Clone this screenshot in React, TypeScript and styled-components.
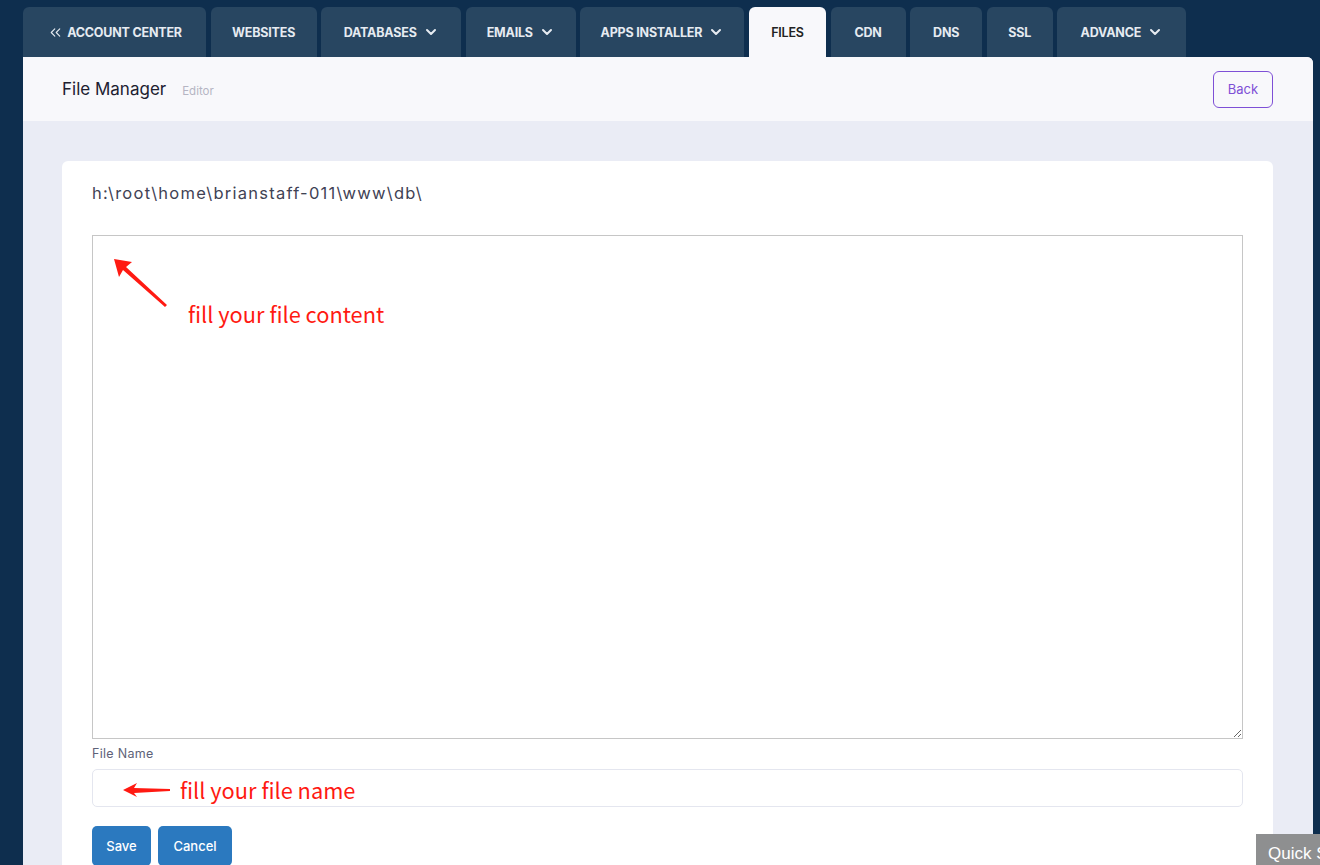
import styled, { createGlobalStyle } from "styled-components";
import { ChevronDown, ChevronsLeft } from "lucide-react";

const GlobalStyle = createGlobalStyle`
  html, body {
    margin: 0;
    padding: 0;
    background-color: #0e2e4e;
    overflow: hidden;
    font-family: Inter, "Noto Sans", sans-serif;
  }
  * {
    box-sizing: border-box;
  }
`;

const Page = styled.div`
  height: 865px;
  padding: 7px 7px 0 23px;
  display: flex;
  flex-direction: column;
`;

const TabBar = styled.nav`
  display: flex;
  flex-shrink: 0;
  gap: 4.6px;
  height: 50px;
`;

const Tab = styled.div<{ $width: number; $active?: boolean }>`
  width: ${(p) => p.$width}px;
  height: 50px;
  display: flex;
  align-items: center;
  justify-content: center;
  gap: 6px;
  border-radius: 6px 6px 0 0;
  background-color: ${(p) => (p.$active ? "#f8f8fb" : "#284661")};
  color: ${(p) => (p.$active ? "#222" : "#e6ebf1")};
  font-size: 12.5px;
  font-weight: ${(p) => (p.$active ? 600 : 700)};
  letter-spacing: -0.2px;
  text-transform: uppercase;
  white-space: nowrap;
`;

const Main = styled.main`
  flex: 1;
  min-height: 0;
  width: 1290px;
  background-color: #eaecf5;
  border-top-right-radius: 6px;
  display: flex;
  flex-direction: column;
  overflow: hidden;
`;

const Header = styled.header`
  flex-shrink: 0;
  height: 64px;
  background-color: #f8f8fb;
  display: flex;
  align-items: center;
  justify-content: space-between;
  padding: 0 40px 0 39px;
`;

const TitleGroup = styled.div`
  display: flex;
  align-items: baseline;
  gap: 16px;
`;

const Title = styled.h1`
  margin: 0;
  font-size: 17px;
  font-weight: 400;
  color: #202030;
`;

const Subtitle = styled.span`
  font-size: 11.5px;
  color: #b5b5c3;
`;

const OutlineButton = styled.button`
  width: 60px;
  height: 37px;
  border: 1px solid #7e4fd6;
  border-radius: 6px;
  background: transparent;
  color: #7e4fd6;
  font-family: inherit;
  font-size: 13px;
`;

const Body = styled.div`
  flex-shrink: 0;
  padding: 40px 40px 0 39px;
`;

const Card = styled.section`
  background-color: #ffffff;
  border-radius: 6px;
  padding: 21px 30px 30px 30px;
  min-height: 720px;
`;

const PathText = styled.div`
  font-size: 16.5px;
  line-height: 22px;
  letter-spacing: 1.25px;
  color: #3f4254;
  margin-bottom: 31px;
`;

const EditorWrap = styled.div`
  position: relative;
`;

const Editor = styled.textarea`
  display: block;
  width: 100%;
  height: 504px;
  border: 1px solid #c6c6c6;
  border-radius: 0;
  resize: vertical;
  outline: none;
  font-family: inherit;
`;

const FieldLabel = styled.label`
  display: block;
  margin-top: 7px;
  font-size: 12.5px;
  letter-spacing: 0.3px;
  color: #5e6278;
`;

const FieldWrap = styled.div`
  position: relative;
  margin-top: 8px;
`;

const TextInput = styled.input`
  display: block;
  width: 100%;
  height: 38px;
  border: 1px solid #e4e6ef;
  border-radius: 5px;
  outline: none;
`;

const Actions = styled.div`
  display: flex;
  gap: 7px;
  margin-top: 19px;
`;

const SolidButton = styled.button<{ $width: number }>`
  width: ${(p) => p.$width}px;
  height: 40px;
  border: none;
  border-radius: 5px;
  background-color: #2b79bf;
  color: #ffffff;
  font-family: inherit;
  font-size: 13px;
  font-weight: 500;
`;

const Note = styled.div<{ $left: number; $top: number }>`
  position: absolute;
  left: ${(p) => p.$left}px;
  top: ${(p) => p.$top}px;
  display: flex;
  align-items: center;
  pointer-events: none;
`;

const NoteText = styled.span`
  font-family: "Noto Sans CJK SC", "Noto Sans", sans-serif;
  font-size: 21.8px;
  color: #ff1a12;
  white-space: nowrap;
`;

const QuickTab = styled.div`
  position: fixed;
  left: 1256px;
  top: 834px;
  width: 80px;
  height: 40px;
  padding: 10px 0 0 12px;
  background-color: #8e8f90;
  color: #ffffff;
  font-family: "Liberation Sans", Arial, sans-serif;
  font-size: 17px;
  white-space: nowrap;
`;

const tabs = [
  { label: "Account Center", width: 183, back: true },
  { label: "Websites", width: 106 },
  { label: "Databases", width: 140, menu: true },
  { label: "Emails", width: 110, menu: true },
  { label: "Apps Installer", width: 164, menu: true },
  { label: "Files", width: 77, active: true },
  { label: "CDN", width: 75 },
  { label: "DNS", width: 72 },
  { label: "SSL", width: 66 },
  { label: "Advance", width: 129, menu: true },
];

function App() {
  return (
    <>
      <GlobalStyle />
      <Page>
        <TabBar>
          {tabs.map((t) => (
            <Tab key={t.label} $width={t.width} $active={t.active}>
              {t.back && <ChevronsLeft size={17} strokeWidth={1.6} style={{ marginRight: -3 }} />}
              {t.label}
              {t.menu && <ChevronDown size={16} strokeWidth={3} />}
            </Tab>
          ))}
        </TabBar>
        <Main>
          <Header>
            <TitleGroup>
              <Title>File Manager</Title>
              <Subtitle>Editor</Subtitle>
            </TitleGroup>
            <OutlineButton>Back</OutlineButton>
          </Header>
          <Body>
            <Card>
              <PathText>h:\root\home\brianstaff-011\www\db\</PathText>
              <EditorWrap>
                <Editor />
                <Note $left={21} $top={23}>
                  <svg width="56" height="50" viewBox="0 0 56 50">
                    <polygon points="1,1 19,4 13,9 54,47 52,49 10,12 6,19" fill="#ff1a12" />
                  </svg>
                </Note>
                <Note $left={96} $top={63}>
                  <NoteText>fill your file content</NoteText>
                </Note>
              </EditorWrap>
              <FieldLabel>File Name</FieldLabel>
              <FieldWrap>
                <TextInput />
                <Note $left={30} $top={5}>
                  <svg width="50" height="14" viewBox="0 0 50 14" style={{ marginRight: 8 }}>
                    <polygon points="1,7 15,0 12,5 48,6 48,8 12,10 15,14" fill="#ff1a12" />
                  </svg>
                  <NoteText>fill your file name</NoteText>
                </Note>
              </FieldWrap>
              <Actions>
                <SolidButton $width={59}>Save</SolidButton>
                <SolidButton $width={74}>Cancel</SolidButton>
              </Actions>
            </Card>
          </Body>
        </Main>
      </Page>
      <QuickTab>Quick S</QuickTab>
    </>
  );
}

export default App;
